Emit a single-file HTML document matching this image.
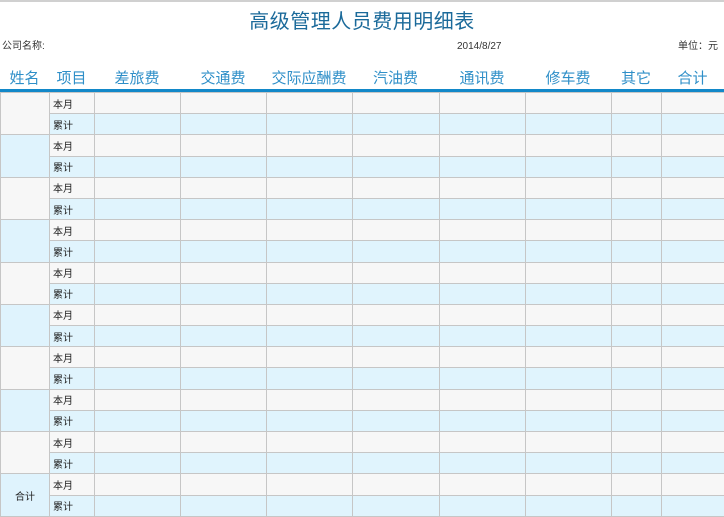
<!DOCTYPE html>
<html><head><meta charset="utf-8"><style>
body{margin:0;width:724px;height:517px;overflow:hidden;background:#fff;font-family:"Liberation Sans","Noto Sans CJK SC",sans-serif;position:relative}
.top{position:absolute;left:0;top:0;width:724px;height:2px;background:#d0d0d0}
.title{position:absolute;left:0;width:724px;top:5px;text-align:center;font-size:20px;color:#1b6a9a;font-weight:normal;letter-spacing:0.5px}
.s{position:absolute;top:41px;font-size:10px;line-height:12px;color:#333}
.hd{position:absolute;top:67px;font-size:15px;color:#2f8fc8;text-align:center}
.line{position:absolute;left:0;top:89px;width:724px;height:3px;background:#1288c9}
table{position:absolute;left:0;top:92px;border-collapse:collapse;table-layout:fixed;width:725px;height:425px}
td{border:1px solid #c6c6c6;padding:0;font-size:10px;color:#222}
tr{height:21.2px}
tr.a td{background:#f7f7f7}
tr.b td{background:#e0f4fd}
td.n{text-align:center}
td.g{background:#f7f7f7!important}
td.bl{background:#dff3fd!important}
td.i{padding-left:3px}
</style></head><body>
<div class="top"></div>
<div class="title">高级管理人员费用明细表</div>
<div class="s" style="left:2px">公司名称:</div>
<div class="s" style="left:457px">2014/8/27</div>
<div class="s" style="left:678px">单位：元</div>
<div class="hd" style="left:0;width:49px">姓名</div>
<div class="hd" style="left:49px;width:45px">项目</div>
<div class="hd" style="left:94px;width:86px">差旅费</div>
<div class="hd" style="left:180px;width:86px">交通费</div>
<div class="hd" style="left:266px;width:86px">交际应酬费</div>
<div class="hd" style="left:352px;width:87px">汽油费</div>
<div class="hd" style="left:439px;width:86px">通讯费</div>
<div class="hd" style="left:525px;width:86px">修车费</div>
<div class="hd" style="left:611px;width:50px">其它</div>
<div class="hd" style="left:661px;width:63px">合计</div>
<div class="line"></div>
<table>
<colgroup><col style="width:49px"><col style="width:45px"><col style="width:86px"><col style="width:86px"><col style="width:86px"><col style="width:87px"><col style="width:86px"><col style="width:86px"><col style="width:50px"><col style="width:64px"></colgroup>
<tbody>
<tr class="a"><td rowspan="2" class="n g"></td><td class="i">本月</td><td></td><td></td><td></td><td></td><td></td><td></td><td></td><td></td></tr>
<tr class="b"><td class="i">累计</td><td></td><td></td><td></td><td></td><td></td><td></td><td></td><td></td></tr>
<tr class="a"><td rowspan="2" class="n bl"></td><td class="i">本月</td><td></td><td></td><td></td><td></td><td></td><td></td><td></td><td></td></tr>
<tr class="b"><td class="i">累计</td><td></td><td></td><td></td><td></td><td></td><td></td><td></td><td></td></tr>
<tr class="a"><td rowspan="2" class="n g"></td><td class="i">本月</td><td></td><td></td><td></td><td></td><td></td><td></td><td></td><td></td></tr>
<tr class="b"><td class="i">累计</td><td></td><td></td><td></td><td></td><td></td><td></td><td></td><td></td></tr>
<tr class="a"><td rowspan="2" class="n bl"></td><td class="i">本月</td><td></td><td></td><td></td><td></td><td></td><td></td><td></td><td></td></tr>
<tr class="b"><td class="i">累计</td><td></td><td></td><td></td><td></td><td></td><td></td><td></td><td></td></tr>
<tr class="a"><td rowspan="2" class="n g"></td><td class="i">本月</td><td></td><td></td><td></td><td></td><td></td><td></td><td></td><td></td></tr>
<tr class="b"><td class="i">累计</td><td></td><td></td><td></td><td></td><td></td><td></td><td></td><td></td></tr>
<tr class="a"><td rowspan="2" class="n bl"></td><td class="i">本月</td><td></td><td></td><td></td><td></td><td></td><td></td><td></td><td></td></tr>
<tr class="b"><td class="i">累计</td><td></td><td></td><td></td><td></td><td></td><td></td><td></td><td></td></tr>
<tr class="a"><td rowspan="2" class="n g"></td><td class="i">本月</td><td></td><td></td><td></td><td></td><td></td><td></td><td></td><td></td></tr>
<tr class="b"><td class="i">累计</td><td></td><td></td><td></td><td></td><td></td><td></td><td></td><td></td></tr>
<tr class="a"><td rowspan="2" class="n bl"></td><td class="i">本月</td><td></td><td></td><td></td><td></td><td></td><td></td><td></td><td></td></tr>
<tr class="b"><td class="i">累计</td><td></td><td></td><td></td><td></td><td></td><td></td><td></td><td></td></tr>
<tr class="a"><td rowspan="2" class="n g"></td><td class="i">本月</td><td></td><td></td><td></td><td></td><td></td><td></td><td></td><td></td></tr>
<tr class="b"><td class="i">累计</td><td></td><td></td><td></td><td></td><td></td><td></td><td></td><td></td></tr>
<tr class="a"><td rowspan="2" class="n bl">合计</td><td class="i">本月</td><td></td><td></td><td></td><td></td><td></td><td></td><td></td><td></td></tr>
<tr class="b"><td class="i">累计</td><td></td><td></td><td></td><td></td><td></td><td></td><td></td><td></td></tr>
</tbody></table>
</body></html>
